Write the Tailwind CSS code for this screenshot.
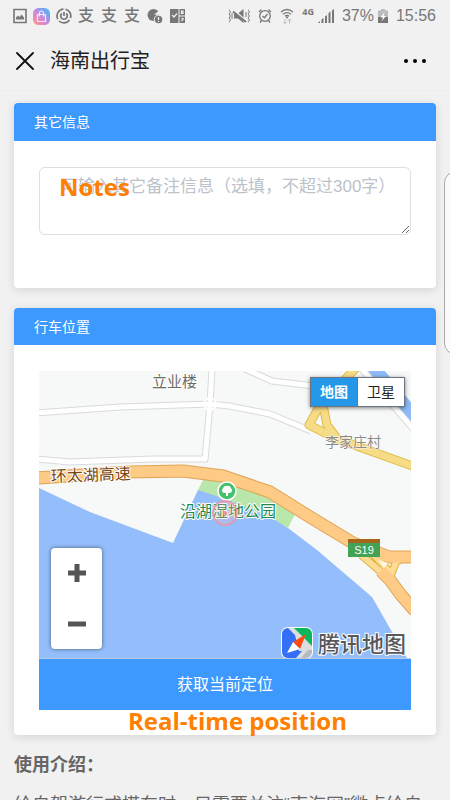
<!DOCTYPE html>
<html lang="zh-CN">
<head>
    <meta charset="UTF-8">
    <meta name="viewport" content="width=device-width, initial-scale=1.0">
    <title>海南出行宝</title>
    <script src="https://cdn.jsdelivr.net/npm/@tailwindcss/browser@4"></script>
</head>
<body class="bg-[#f1f1f1] font-['Liberation_Sans','Noto_Sans_CJK_SC',sans-serif]">
    <div class="relative h-screen overflow-hidden">
        <!-- Status bar -->
        <div class="flex h-8 items-center justify-between pl-[13px] pr-[14px] text-[#777]">
            <div class="flex items-center gap-1.5">
                <svg class="h-4 w-[14px]" viewBox="0 0 14 16" fill="none" stroke="currentColor" stroke-width="1.6">
                    <path d="M1 1.5h12v13H1z"/>
                    <path d="M3 11.500V9.500l2-2 1.500 1.500 2-2.500 2.500 3v2z" fill="currentColor" stroke="none"/>
                </svg>
                <svg class="size-[17px]" viewBox="0 0 17 17" fill="none">
                    <defs>
                        <linearGradient id="bag" x1="0" y1="1" x2="1" y2="0">
                            <stop offset="0" stop-color="#f9b08c"/>
                            <stop offset=".2" stop-color="#f58aa8"/>
                            <stop offset=".5" stop-color="#c68ae0"/>
                            <stop offset=".8" stop-color="#63a9f5"/>
                            <stop offset="1" stop-color="#5cc8f0"/>
                        </linearGradient>
                    </defs>
                    <rect width="17" height="17" rx="5.500" fill="url(#bag)"/>
                    <path d="M4.500 6.500h8v7h-8zM6.500 8.500V5a2 2 0 0 1 4 0v3.500" stroke="#fff" stroke-opacity=".8" stroke-width="1.200"/>
                </svg>
                <svg class="size-4" viewBox="0 0 16 16" fill="none" stroke="currentColor" stroke-width="1.700">
                    <path d="M9.500 1.200A7 7 0 0 1 14.500 10M13.500 12A7 7 0 0 1 3 13M1.800 11.200A7 7 0 0 1 7.500 1"/>
                    <path d="M5.800 5.500a3.300 3.300 0 1 0 4.400 0M8 4v4"/>
                </svg>
                <span class="w-[17px] text-base leading-4 font-medium">支</span>
                <span class="w-[17px] text-base leading-4 font-medium">支</span>
                <span class="w-[17px] text-base leading-4 font-medium">支</span>
                <svg class="size-4" viewBox="0 0 16 16">
                    <circle cx="6.500" cy="7" r="6" fill="currentColor"/>
                    <path d="M7 6.500 13 2v5z" fill="#f1f1f1"/>
                    <circle cx="11.500" cy="11.500" r="4.300" fill="currentColor" stroke="#f1f1f1"/>
                    <path d="M11.500 9v3M11.500 13v1" stroke="#f1f1f1" stroke-width="1.300"/>
                </svg>
                <svg class="size-4" viewBox="0 0 16 16" fill="none" stroke="#f1f1f1" stroke-width="1.200">
                    <path d="M1 1h8.500v14H1zM10.500 1H16v6.500h-5.500zM10.500 8.500H16V15h-5.500z" fill="currentColor" stroke="none"/>
                    <path d="m3 7 2 2 3-3.500M12.500 3h1.500v2.500h-1.500zM12.500 10.500h1.500v1l-1 .8v1"/>
                </svg>
            </div>
            <div class="flex items-center gap-1">
                <svg class="mr-1 h-4 w-[22px]" viewBox="0 0 22 16" fill="none" stroke="currentColor">
                    <path d="M6 5.500h4L15.500 1v14L10 10.500H6z" fill="currentColor" stroke="none"/>
                    <path d="M5 2 18 13.500" stroke="#f1f1f1" stroke-width="3"/>
                    <path d="M5 3.500 18 14" stroke-width="1.800"/>
                    <path d="m1 2 1.500 2L1 6l1.500 2L1 10l1.500 2L1 14M20 2l1.500 2L20 6l1.500 2-1.500 2 1.500 2-1.500 2M4 5v6M18 4v5"/>
                </svg>
                <svg class="h-4 w-[14px]" viewBox="0 0 14 16" fill="none" stroke="currentColor" stroke-width="1.300">
                    <circle cx="7" cy="8" r="5.300"/>
                    <path d="m4.500 8 2 1.700L9.500 6M1 4l2.500-2.500M13 4l-2.500-2.500M3.500 12.500 2 14.500M10.500 12.500l1.500 2"/>
                </svg>
                <svg class="mx-1 h-4 w-[14px]" viewBox="0 0 14 16" fill="none" stroke="currentColor" stroke-width="1.400">
                    <path d="M1 4q6-5 12 0M3 6.200q4-3.200 8 0M5 8.300q2-1.600 4 0"/>
                    <circle cx="7" cy="9.500" r="1" fill="currentColor" stroke="none"/>
                    <path d="M5 11v4.500M3.500 14 5 15.500 6.500 14M9.500 15.500V11M8 12.500 9.500 11l1.500 1.500" stroke="#bbb" stroke-width="1"/>
                </svg>
                <span class="mb-2 font-['Open_Sans'] text-[9px] leading-3 font-bold">4G</span>
                <svg class="h-4 w-4" viewBox="0 0 16 16" fill="currentColor">
                    <path d="M0 15l2-2v2zM3.500 11.500 5.500 10v5h-2zM7 8.500 9 7v8H7zM10.500 5l2-1.500V15h-2zM14 2.500 16 1v14h-2z"/>
                </svg>
                <span class="ml-1 text-base leading-5">37%</span>
                <svg class="h-4 w-[10px]" viewBox="0 0 10 16">
                    <path d="M0 2.500h3V1h4v1.500h3V9H0z" fill="#bbb"/>
                    <path d="M0 9h10v6H0z" fill="#777"/>
                    <path d="M6.500 4 2.500 9.500H5L3.500 13.500 8 8H5.500z" fill="#fff"/>
                </svg>
                <span class="ml-1 text-base leading-5">15:56</span>
            </div>
        </div>

        <!-- Title bar -->
        <header class="flex h-[58px] items-center px-4">
            <button type="button" aria-label="关闭">
                <svg class="size-[18px]" viewBox="0 0 18 18" stroke="#111" stroke-width="1.800" stroke-linecap="round"><path d="M1 1l16 16M17 1 1 17"/></svg>
            </button>
            <h1 class="ml-4 flex-1 text-xl text-[#222]">海南出行宝</h1>
            <button type="button" aria-label="更多" class="mr-2">
                <svg class="h-4 w-[22px]" viewBox="0 0 22 16" fill="#000"><circle cx="2" cy="8" r="2"/><circle cx="11" cy="8" r="2"/><circle cx="20" cy="8" r="2"/></svg>
            </button>
        </header>

        <main class="border-t border-[#ededed] px-[14px] pt-3">
            <!-- Notes card -->
            <section class="rounded bg-white shadow-[0_2px_10px_rgba(0,0,0,0.12)]">
                <h2 class="flex h-[38px] items-center rounded-t bg-[#3e99fe] px-5 text-sm text-white"><label for="notes">其它信息</label></h2>
                <div class="relative px-[25px] pt-[26px] pb-[53px]">
                    <textarea id="notes" placeholder="可输入其它备注信息（选填，不超过300字）" class="block h-[68px] w-full rounded-md border border-[#dcdfe3] py-[7px] pl-[21px] text-[17px] leading-6 placeholder:text-[#bcc2ca]"></textarea>
                    <span class="absolute top-[32px] left-[45px] font-['Open_Sans'] text-2xl leading-7 font-bold text-[#ff7f00]">Notes</span>
                </div>
            </section>

            <!-- Position card -->
            <section class="relative mt-5 rounded bg-white shadow-[0_2px_10px_rgba(0,0,0,0.12)]">
                <h2 class="flex h-[37px] items-center rounded-t bg-[#3e99fe] px-5 text-sm text-white">行车位置</h2>
                <div class="px-[25px] pt-[26px] pb-[25px]">
                    <div class="relative border-b border-[#b9cbe6]">
                        <svg class="block h-[287px] w-full" viewBox="0 0 372 287" preserveAspectRatio="xMidYMid slice" fill="none">
                            <rect width="372" height="287" fill="#f7f8f8"/>
                            <!-- Lake and park -->
                            <path d="M0 117 51 141 134 172 159 119 200 128 236 148 249 157 278 179 333 226 368 287H0z" fill="#94befb"/>
                            <path d="M165 107 159 119 180 126 200 133 236 149 249 157 256 143 231 122 188 107z" fill="#b9e6ab"/>
                            <path d="M334-4 376 46" stroke="#8ebaf9" stroke-width="13"/>
                            <!-- Minor roads -->
                            <g stroke="#d9dadc" stroke-width="7">
                                <path d="M-2 42 81 36 171 33 190 35 231 43 272 60M173-2 171 33 166 89M-2 88 31 91 114 88 169 88M206-2 233 10 275 15M321-4 376 60"/>
                            </g>
                            <g stroke="#fff" stroke-width="5">
                                <path d="M-2 42 81 36 171 33 190 35 231 43 272 60M173-2 171 33 166 89M-2 88 31 91 114 88 168 88M206-2 233 10 275 15M321-4 376 60"/>
                            </g>
                            <circle cx="171" cy="33" r="6" stroke="#fff" stroke-width="2"/>
                            <!-- Yellow road -->
                            <g stroke="#dfbd48" stroke-width="9" stroke-linejoin="round">
                                <path d="M318-4 281 34 270 54 298 68 376 96M284 34 288 54 300 70"/>
                            </g>
                            <g stroke="#f6dc86" stroke-width="7" stroke-linejoin="round">
                                <path d="M318-4 281 34 270 54 298 68 376 96M284 34 288 54 300 70"/>
                            </g>
                            <!-- Expressway -->
                            <g stroke-linejoin="round">
                                <path d="M322 184 334 194 351 209 362 224 376 240M333 182 350 200M352 204 357 191 364 187" stroke="#e0b23f" stroke-width="8"/>
                                <path d="M-2 107 91 101 144 100 184 105 231 121 271 146 314 172 350 186 376 186M342 200 351 209 362 224 376 240" stroke="#dfa355" stroke-width="13"/>
                                <path d="M322 184 334 194 351 209M333 182 350 200M352 204 357 191 364 187" stroke="#fbdc92" stroke-width="6"/>
                                <path d="M-2 107 91 101 144 100 184 105 231 121 271 146 314 172 350 186 376 186M342 200 351 209 362 224 376 240" stroke="#fdcb86" stroke-width="11"/>
                            </g>
                            <path d="M339 189 349 192 345 197z" fill="#fff8e0"/>
                            <!-- Park marker -->
                            <circle cx="188" cy="120" r="9" fill="#45c06c" stroke="#fff" stroke-width="1.500"/>
                            <path d="M187 125v-3h-2a2.500 2.500 0 0 1-1-4.500 3 3 0 0 1 4-2.500 3 3 0 0 1 4 2.500 2.500 2.500 0 0 1-1 4.500h-2v3z" fill="#fff"/>
                            <!-- Labels -->
                            <g class="font-['Noto_Sans_CJK_SC',sans-serif]" stroke="#fff" stroke-width="2" stroke-linejoin="round" paint-order="stroke">
                                <text x="113" y="16" font-size="15" fill="#6d6d66">立业楼</text>
                                <text x="286" y="76" font-size="14" fill="#8b8b8b" stroke-opacity=".5">李家庄村</text>
                                <text x="12" y="111" font-size="16" fill="#7b4510" transform="rotate(-2 12 111)">环太湖高速</text>
                                <text x="141" y="146" font-size="16" fill="#228a4b">沿湖湿地公园</text>
                                <text x="279" y="281" font-size="22" font-weight="500" fill="#56585c">腾讯地图</text>
                            </g>
                            <circle cx="186" cy="142" r="12" stroke="#f78f9b" stroke-width="1.500" fill="#f9b6c0" fill-opacity=".25"/>
                            <circle cx="186" cy="142" r="2" fill="#f78f9b"/>
                            <!-- Road shield -->
                            <rect x="309" y="168" width="32" height="18" fill="#43a256"/>
                            <rect x="309" y="168" width="32" height="4" fill="#a5651b"/>
                            <text x="325" y="183" font-size="11" text-anchor="middle" fill="#fff">S19</text>
                            <!-- Map provider logo -->
                            <clipPath id="logo"><rect x="243" y="257" width="30" height="30" rx="6"/></clipPath>
                            <rect x="242" y="256" width="32" height="32" rx="7" fill="#fff"/>
                            <g clip-path="url(#logo)">
                                <path d="M243 257h30v30h-30z" fill="#dcdde0"/>
                                <path d="M243 257h6l7 7 4 16 3 0-6 7h-14z" fill="#3370f6"/>
                                <path d="M255 257h18v18z" fill="#09b75b"/>
                                <path d="M262 287l7-8h4v8z" fill="#b6b9bf"/>
                                <path d="M267 263 254 271 261 278z" fill="#ff4a13"/>
                                <path d="M254 271 248 282 261 278z" fill="#fff"/>
                            </g>
                        </svg>
                        <div class="absolute top-1.5 right-1.5 flex h-[30px] w-[95px] border border-[#6c7480] bg-white text-sm shadow-[0_1px_4px_rgba(0,0,0,0.5)]">
                            <button type="button" class="flex-1 bg-[#2597e8] font-bold text-white">地图</button>
                            <button type="button" class="flex-1 border-l border-[#6c7480] text-[#222]">卫星</button>
                        </div>
                        <div class="absolute bottom-[9px] left-3 flex h-[101px] w-[51px] flex-col rounded-sm bg-white shadow-[0_0_4px_rgba(0,0,0,0.5)]">
                            <button type="button" aria-label="放大" class="flex flex-1 items-center justify-center">
                                <svg class="size-[18px]" viewBox="0 0 18 18" stroke="#555" stroke-width="5"><path d="M0 9h18M9 0v18"/></svg>
                            </button>
                            <button type="button" aria-label="缩小" class="flex flex-1 items-center justify-center">
                                <svg class="size-[18px]" viewBox="0 0 18 18" stroke="#555" stroke-width="5"><path d="M0 9h18"/></svg>
                            </button>
                        </div>
                    </div>
                    <button type="button" class="block h-[51px] w-full bg-[#3e99fe] text-base text-white">获取当前定位</button>
                </div>
                <span class="absolute bottom-0 left-[114px] font-['Open_Sans'] text-2xl leading-7 font-bold text-[#ff7f00]">Real-time position</span>
            </section>

            <!-- Instructions -->
            <section class="pt-[18px] text-lg leading-6 whitespace-nowrap text-[#666]">
                <h2 class="font-bold">使用介绍：</h2>
                <p class="mt-4">给自驾游行或搭车时，只需要关注“南海网”微点给自</p>
            </section>
        </main>

        <!-- Edge panel handle -->
        <div class="absolute top-[171px] -right-3 h-[184px] w-[18px] rounded-l-[12px] border border-[#aaa] bg-[#fafafa]"></div>
    </div>
</body>
</html>
